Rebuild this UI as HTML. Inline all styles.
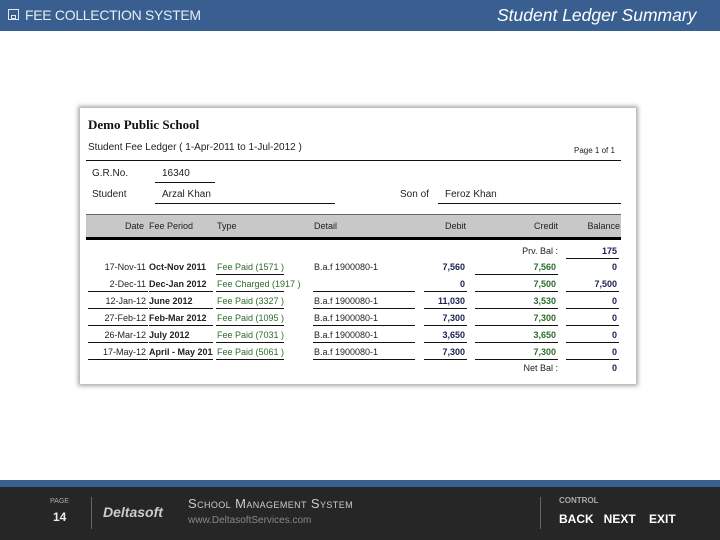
<!DOCTYPE html>
<html><head><meta charset="utf-8"><style>
body{margin:0;width:720px;height:540px;position:relative;background:#fff;font-family:"Liberation Sans",sans-serif;overflow:hidden}
.a{position:absolute;white-space:nowrap}
.top{position:absolute;left:0;top:0;width:720px;height:31px;background:#385f8f}
.doc{position:absolute;left:80px;top:108px;width:556px;height:276px;background:#fff;box-shadow:0 0 4px 2px #aaa}
.t{position:absolute;font-size:9px;white-space:nowrap;color:#222}
.r{text-align:right}
.b{font-weight:bold}
.g{color:#2c6b2c}
.n{color:#1a2050}
.ln{position:absolute;height:1px;background:#111}
</style></head><body>
<div class="top"></div>
<div class="a" style="left:25px;top:7px;color:#e6edf6;font-size:14px;letter-spacing:-0.3px">FEE COLLECTION SYSTEM</div>
<div class="a" style="left:8px;top:9px;width:11px;height:11px;border:1.5px solid #dfe7f2;box-sizing:border-box"></div>
<div class="a" style="left:11px;top:15px;width:5px;height:4px;border:1px solid #dfe7f2;box-sizing:border-box"></div>
<div class="a" style="left:497px;top:5px;color:#fff;font-size:17.5px;font-style:italic">Student Ledger Summary</div>
<div class="doc"></div>
<div class="t b" style="left:88px;top:117px;font-family:'Liberation Serif',serif;font-size:13px;color:#111">Demo Public School</div>
<div class="t" style="left:88px;top:142px;font-size:10px">Student Fee Ledger ( 1-Apr-2011 to 1-Jul-2012 )</div>
<div class="t" style="left:574px;top:146px;font-size:8px">Page 1 of 1</div>
<div class="ln" style="left:86px;top:160px;width:535px"></div>
<div class="t" style="left:92px;top:168px;font-size:10px">G.R.No.</div>
<div class="t" style="left:162px;top:168px;font-size:10px">16340</div>
<div class="ln" style="left:155px;top:182px;width:60px"></div>
<div class="t" style="left:92px;top:189px;font-size:10px">Student</div>
<div class="t" style="left:162px;top:189px;font-size:10px">Arzal Khan</div>
<div class="ln" style="left:155px;top:203px;width:180px"></div>
<div class="t" style="left:400px;top:189px;font-size:10px">Son of</div>
<div class="t" style="left:445px;top:189px;font-size:10px">Feroz Khan</div>
<div class="ln" style="left:438px;top:203px;width:183px"></div>
<div class="a" style="left:86px;top:214px;width:535px;height:23px;background:#c8c8c8;border-top:1px solid #666"></div>
<div class="a" style="left:86px;top:237px;width:535px;height:3px;background:#000"></div>
<div class="t r" style="left:100px;width:44px;top:221px">Date</div>
<div class="t" style="left:149px;top:221px">Fee Period</div>
<div class="t" style="left:217px;top:221px">Type</div>
<div class="t" style="left:314px;top:221px">Detail</div>
<div class="t r" style="left:440px;width:26px;top:221px">Debit</div>
<div class="t r" style="left:520px;width:38px;top:221px">Credit</div>
<div class="t r" style="left:570px;width:50px;top:221px">Balance</div>
<div class="t r" style="left:500px;width:58px;top:246px">Prv. Bal :</div>
<div class="t r b n" style="left:570px;width:47px;top:246px">175</div>
<div class="ln" style="left:566px;top:258px;width:53px"></div>

<div id="rows"></div>
<div class="t r" style="left:500px;width:58px;top:363px">Net Bal :</div>
<div class="t r b n" style="left:570px;width:47px;top:363px">0</div>

<div class="a" style="left:0;top:480px;width:720px;height:7px;background:#385f8f"></div>
<div class="a" style="left:0;top:487px;width:720px;height:53px;background:#262626"></div>
<div class="a" style="left:50px;top:498px;color:#aaa;font-size:7px">PAGE</div>
<div class="a" style="left:53px;top:510px;color:#eee;font-size:12px;font-weight:bold">14</div>
<div class="a" style="left:91px;top:497px;width:1px;height:32px;background:#666"></div>
<div class="a" style="left:103px;top:504px;color:#ccc;font-size:14px;font-weight:bold;font-style:italic">Deltasoft</div>
<div class="a" style="left:188px;top:496px;color:#ccc;font-size:13px;font-variant:small-caps;letter-spacing:0.4px">School Management System</div>
<div class="a" style="left:188px;top:515px;color:#888;font-size:10px">www.DeltasoftServices.com</div>
<div class="a" style="left:540px;top:497px;width:1px;height:32px;background:#666"></div>
<div class="a" style="left:559px;top:496px;color:#aaa;font-size:8px;font-weight:bold">CONTROL</div>
<div class="a" style="left:559px;top:512px;color:#fff;font-size:12px;font-weight:bold">BACK&nbsp;&nbsp;&nbsp;NEXT&nbsp;&nbsp;&nbsp;&nbsp;EXIT</div>
<script>
var d=[["17-Nov-11","Oct-Nov 2011","Fee Paid (1571 )","B.a.f 1900080-1","7,560","7,560","0"],
["2-Dec-11","Dec-Jan 2012","Fee Charged (1917 )","","0","7,500","7,500"],
["12-Jan-12","June 2012","Fee Paid (3327 )","B.a.f 1900080-1","11,030","3,530","0"],
["27-Feb-12","Feb-Mar 2012","Fee Paid (1095 )","B.a.f 1900080-1","7,300","7,300","0"],
["26-Mar-12","July 2012","Fee Paid (7031 )","B.a.f 1900080-1","3,650","3,650","0"],
["17-May-12","April - May 2012","Fee Paid (5061 )","B.a.f 1900080-1","7,300","7,300","0"]];
var h="";
d.forEach(function(r,i){var y=262+i*17;
h+='<div class="t r" style="left:90px;width:56px;top:'+y+'px">'+r[0]+'</div>';
h+='<div class="t b" style="left:149px;top:'+y+'px;width:64px;overflow:hidden">'+r[1]+'</div>';
h+='<div class="t g" style="left:217px;top:'+y+'px">'+r[2]+'</div>';
h+='<div class="t" style="left:314px;top:'+y+'px">'+r[3]+'</div>';
h+='<div class="t r b n" style="left:420px;width:45px;top:'+y+'px">'+r[4]+'</div>';
h+='<div class="t r b g" style="left:500px;width:56px;top:'+y+'px">'+r[5]+'</div>';
h+='<div class="t r b n" style="left:566px;width:51px;top:'+y+'px">'+r[6]+'</div>';
if(i>0){[[88,60],[149,64],[216,68],[313,102],[424,43],[475,83],[566,53]].forEach(function(c){h+='<div class="ln" style="left:'+c[0]+'px;top:'+(y+12)+'px;width:'+c[1]+'px"></div>';});}
else{[[216,68],[475,83]].forEach(function(c){h+='<div class="ln" style="left:'+c[0]+'px;top:'+(y+12)+'px;width:'+c[1]+'px"></div>';});}
});
document.getElementById("rows").innerHTML=h;
</script>
</body></html>
